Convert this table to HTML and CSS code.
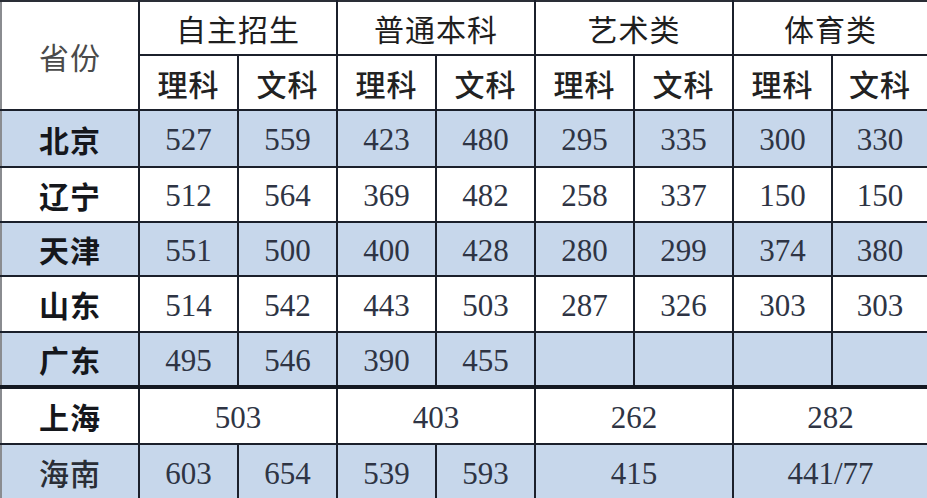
FILE: index.html
```html
<!DOCTYPE html>
<html lang="zh">
<head>
<meta charset="utf-8">
<title>分数线</title>
<link rel="stylesheet" href="styles.css">
</head>
<body>
<table class="scores">
  <colgroup>
    <col class="c-prov">
    <col class="c-num"><col class="c-num"><col class="c-num"><col class="c-num">
    <col class="c-num"><col class="c-num"><col class="c-num"><col class="c-last">
  </colgroup>
  <thead>
    <tr class="h1">
      <th rowspan="2" class="prov-head">省份</th>
      <th colspan="2" class="group">自主招生</th>
      <th colspan="2" class="group">普通本科</th>
      <th colspan="2" class="group">艺术类</th>
      <th colspan="2" class="group">体育类</th>
    </tr>
    <tr class="h2">
      <th class="sub">理科</th><th class="sub">文科</th>
      <th class="sub">理科</th><th class="sub">文科</th>
      <th class="sub">理科</th><th class="sub">文科</th>
      <th class="sub">理科</th><th class="sub">文科</th>
    </tr>
  </thead>
  <tbody>
    <tr class="blue r1">
      <th class="prov">北京</th>
      <td>527</td><td>559</td><td>423</td><td>480</td><td>295</td><td>335</td><td>300</td><td>330</td>
    </tr>
    <tr class="r2">
      <th class="prov">辽宁</th>
      <td>512</td><td>564</td><td>369</td><td>482</td><td>258</td><td>337</td><td>150</td><td>150</td>
    </tr>
    <tr class="blue r3">
      <th class="prov">天津</th>
      <td>551</td><td>500</td><td>400</td><td>428</td><td>280</td><td>299</td><td>374</td><td>380</td>
    </tr>
    <tr class="r4">
      <th class="prov">山东</th>
      <td>514</td><td>542</td><td>443</td><td>503</td><td>287</td><td>326</td><td>303</td><td>303</td>
    </tr>
    <tr class="blue r5 thick">
      <th class="prov">广东</th>
      <td>495</td><td>546</td><td>390</td><td>455</td><td></td><td></td><td></td><td></td>
    </tr>
    <tr class="r6">
      <th class="prov">上海</th>
      <td colspan="2">503</td><td colspan="2">403</td><td colspan="2">262</td><td colspan="2">282</td>
    </tr>
    <tr class="blue r7">
      <th class="prov light">海南</th>
      <td>603</td><td>654</td><td>539</td><td>593</td><td colspan="2">415</td><td colspan="2">441/77</td>
    </tr>
  </tbody>
</table>
</body>
</html>
```

FILE: styles.css
```css
html, body {
  margin: 0;
  padding: 0;
  background: #ffffff;
  overflow: hidden;
}

.scores {
  border-collapse: collapse;
  table-layout: fixed;
  width: 927px;
  margin: 0;
}

.c-prov { width: 138px; }
.c-num { width: 99px; }
.c-last { width: 96px; }

.scores th,
.scores td {
  border: 2px solid #1b202b;
  padding: 0;
  text-align: center;
  vertical-align: middle;
  overflow: hidden;
  white-space: nowrap;
}

.scores tr > :first-child {
  border-left: 2px solid #8a8c90;
}

.scores tr > :last-child {
  border-right: 2px solid #9a9ca0;
}

.h1 th { border-top: 2px solid #2a2e36; }

.h1 { height: 54px; }
.h2 { height: 55px; }
.r1 { height: 57px; }
.r2 { height: 55px; }
.r3 { height: 54px; }
.r4 { height: 56px; }
.r5 { height: 55px; }
.r6 { height: 57px; }
.r7 { height: 56px; }

.prov-head {
  font-family: "Noto Sans CJK SC", "Noto Sans", sans-serif;
  font-weight: 400;
  font-size: 30px;
  color: #4a4a4a;
  letter-spacing: 1px;
  padding-bottom: 4px;
}

.group {
  font-family: "Noto Sans CJK SC", "Noto Sans", sans-serif;
  font-weight: 400;
  font-size: 30px;
  color: #1e1e1e;
  letter-spacing: 1px;
}

.sub {
  font-family: "Noto Sans CJK SC", "Noto Sans", sans-serif;
  font-weight: 500;
  font-size: 30px;
  color: #222222;
  letter-spacing: 1px;
}

.prov {
  font-family: "Noto Sans CJK SC", "Noto Sans", sans-serif;
  font-weight: 700;
  font-size: 30px;
  color: #15171c;
  letter-spacing: 1px;
}

.prov.light {
  font-weight: 500;
  color: #2a2e36;
}

.scores td {
  font-family: "Liberation Serif", "Times New Roman", serif;
  font-size: 31px;
  color: #2e3444;
  padding-top: 3px;
}

.blue th,
.blue td {
  background: #c7d7eb;
}

.thick th,
.thick td {
  border-bottom: 4px solid #141922;
}
```
